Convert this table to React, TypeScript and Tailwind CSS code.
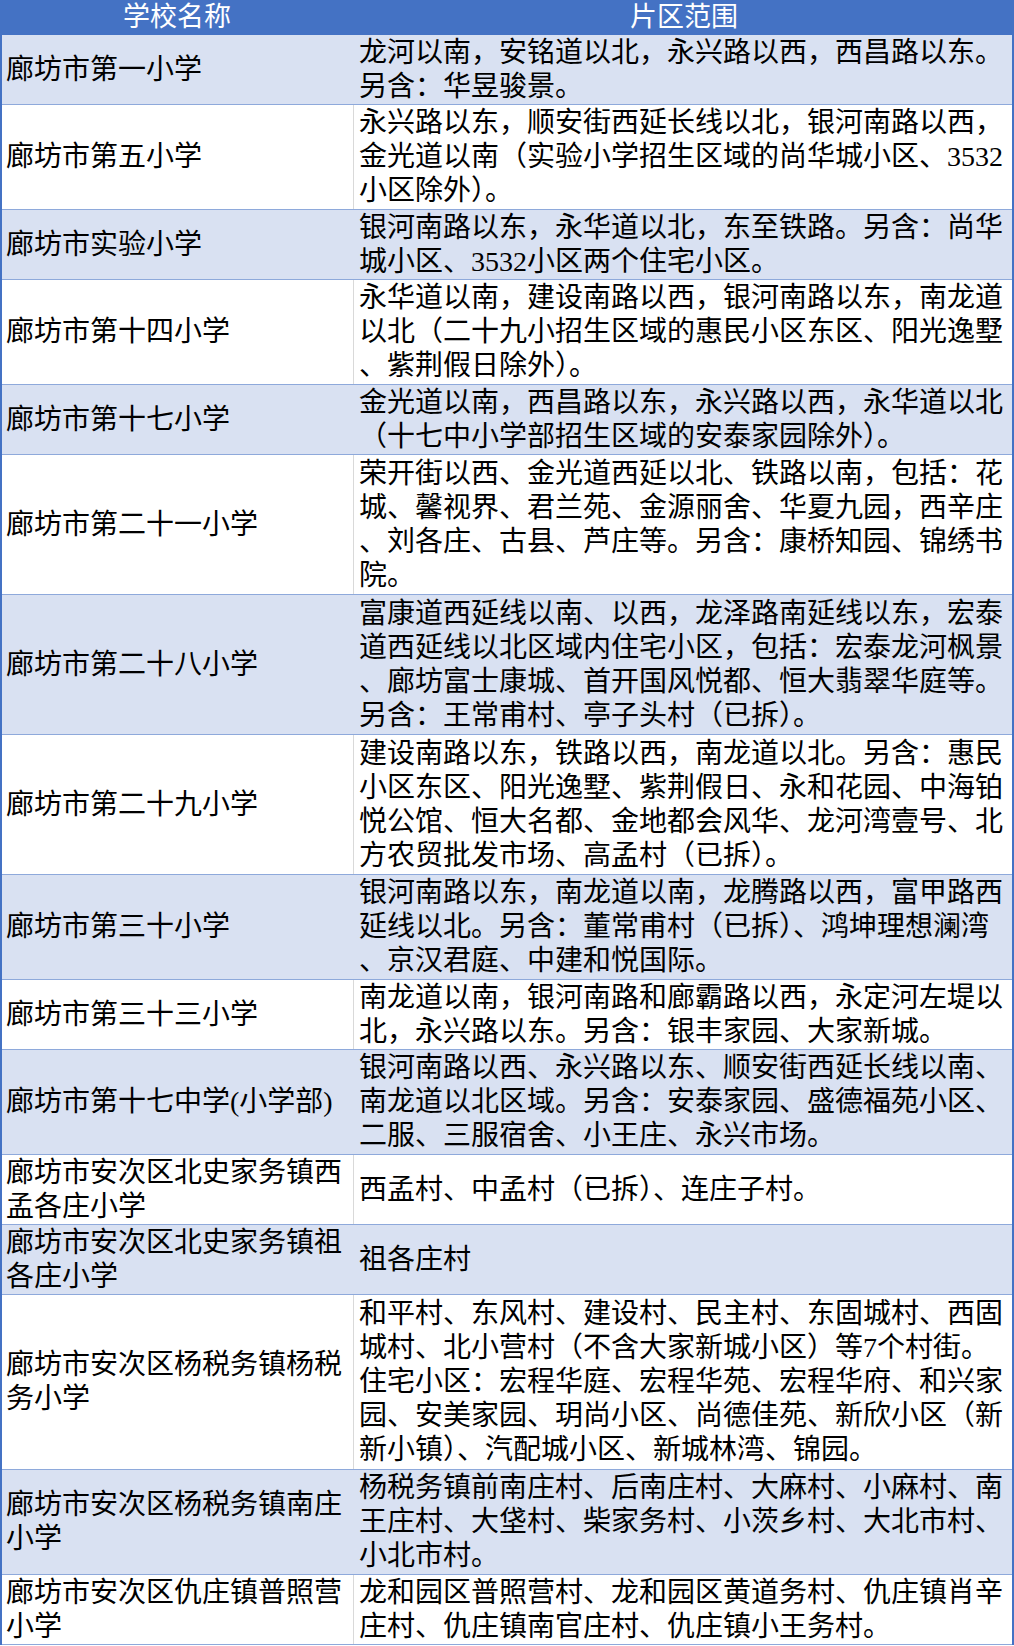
import React from 'react'

type Row = {
  school: string[]
  area: string[]
  lines: 2 | 3 | 4 | 5
}

const rows: Row[] = [
  {
    school: ['廊坊市第一小学'],
    area: ['龙河以南，安铭道以北，永兴路以西，西昌路以东。', '另含：华昱骏景。'],
    lines: 2,
  },
  {
    school: ['廊坊市第五小学'],
    area: [
      '永兴路以东，顺安街西延长线以北，银河南路以西，',
      '金光道以南（实验小学招生区域的尚华城小区、3532',
      '小区除外）。',
    ],
    lines: 3,
  },
  {
    school: ['廊坊市实验小学'],
    area: ['银河南路以东，永华道以北，东至铁路。另含：尚华', '城小区、3532小区两个住宅小区。'],
    lines: 2,
  },
  {
    school: ['廊坊市第十四小学'],
    area: [
      '永华道以南，建设南路以西，银河南路以东，南龙道',
      '以北（二十九小招生区域的惠民小区东区、阳光逸墅',
      '、紫荆假日除外）。',
    ],
    lines: 3,
  },
  {
    school: ['廊坊市第十七小学'],
    area: ['金光道以南，西昌路以东，永兴路以西，永华道以北', '（十七中小学部招生区域的安泰家园除外）。'],
    lines: 2,
  },
  {
    school: ['廊坊市第二十一小学'],
    area: [
      '荣开街以西、金光道西延以北、铁路以南，包括：花',
      '城、馨视界、君兰苑、金源丽舍、华夏九园，西辛庄',
      '、刘各庄、古县、芦庄等。另含：康桥知园、锦绣书',
      '院。',
    ],
    lines: 4,
  },
  {
    school: ['廊坊市第二十八小学'],
    area: [
      '富康道西延线以南、以西，龙泽路南延线以东，宏泰',
      '道西延线以北区域内住宅小区，包括：宏泰龙河枫景',
      '、廊坊富士康城、首开国风悦都、恒大翡翠华庭等。',
      '另含：王常甫村、亭子头村（已拆）。',
    ],
    lines: 4,
  },
  {
    school: ['廊坊市第二十九小学'],
    area: [
      '建设南路以东，铁路以西，南龙道以北。另含：惠民',
      '小区东区、阳光逸墅、紫荆假日、永和花园、中海铂',
      '悦公馆、恒大名都、金地都会风华、龙河湾壹号、北',
      '方农贸批发市场、高孟村（已拆）。',
    ],
    lines: 4,
  },
  {
    school: ['廊坊市第三十小学'],
    area: [
      '银河南路以东，南龙道以南，龙腾路以西，富甲路西',
      '延线以北。另含：董常甫村（已拆）、鸿坤理想澜湾',
      '、京汉君庭、中建和悦国际。',
    ],
    lines: 3,
  },
  {
    school: ['廊坊市第三十三小学'],
    area: ['南龙道以南，银河南路和廊霸路以西，永定河左堤以', '北，永兴路以东。另含：银丰家园、大家新城。'],
    lines: 2,
  },
  {
    school: ['廊坊市第十七中学(小学部)'],
    area: [
      '银河南路以西、永兴路以东、顺安街西延长线以南、',
      '南龙道以北区域。另含：安泰家园、盛德福苑小区、',
      '二服、三服宿舍、小王庄、永兴市场。',
    ],
    lines: 3,
  },
  {
    school: ['廊坊市安次区北史家务镇西', '孟各庄小学'],
    area: ['西孟村、中孟村（已拆）、连庄子村。'],
    lines: 2,
  },
  {
    school: ['廊坊市安次区北史家务镇祖', '各庄小学'],
    area: ['祖各庄村'],
    lines: 2,
  },
  {
    school: ['廊坊市安次区杨税务镇杨税', '务小学'],
    area: [
      '和平村、东风村、建设村、民主村、东固城村、西固',
      '城村、北小营村（不含大家新城小区）等7个村街。',
      '住宅小区：宏程华庭、宏程华苑、宏程华府、和兴家',
      '园、安美家园、玥尚小区、尚德佳苑、新欣小区（新',
      '新小镇）、汽配城小区、新城林湾、锦园。',
    ],
    lines: 5,
  },
  {
    school: ['廊坊市安次区杨税务镇南庄', '小学'],
    area: [
      '杨税务镇前南庄村、后南庄村、大麻村、小麻村、南',
      '王庄村、大垡村、柴家务村、小茨乡村、大北市村、',
      '小北市村。',
    ],
    lines: 3,
  },
  {
    school: ['廊坊市安次区仇庄镇普照营', '小学'],
    area: ['龙和园区普照营村、龙和园区黄道务村、仇庄镇肖辛', '庄村、仇庄镇南官庄村、仇庄镇小王务村。'],
    lines: 2,
  },
]

const heights = {
  2: 'h-[70px]',
  3: 'h-[105px]',
  4: 'h-[140px]',
  5: 'h-[175px]',
}

const font = { fontFamily: '"Liberation Serif", "Noto Sans CJK SC", serif' }

export default function App() {
  return (
    <div className="w-[1014px] bg-white text-black" style={font}>
      <div className="grid h-[35px] grid-cols-[354px_1fr] bg-[#4472C4] text-[27px] leading-[35px] text-white">
        <div className="text-center">学校名称</div>
        <div className="text-center">片区范围</div>
      </div>
      <div className="border-x-[2px] border-[#4472C4]">
        {rows.map((row, i) => {
          const shaded = i % 2 === 0
          return (
            <div
              key={i}
              className={`grid grid-cols-[352px_1fr] border-b border-[#8EA9DB] text-[28px] leading-[34px] ${heights[row.lines]} ${
                shaded ? 'bg-[#D9E1F2]' : 'bg-white'
              }`}
            >
              <div
                className={`flex flex-col justify-center pl-[4px] whitespace-nowrap border-r ${
                  shaded ? 'border-transparent' : 'border-[#D9D9D9]'
                }`}
              >
                {row.school.map((line) => (
                  <div key={line}>{line}</div>
                ))}
              </div>
              <div className="flex flex-col justify-center pl-[5px] whitespace-nowrap overflow-hidden">
                {row.area.map((line) => (
                  <div key={line}>{line}</div>
                ))}
              </div>
            </div>
          )
        })}
      </div>
    </div>
  )
}
